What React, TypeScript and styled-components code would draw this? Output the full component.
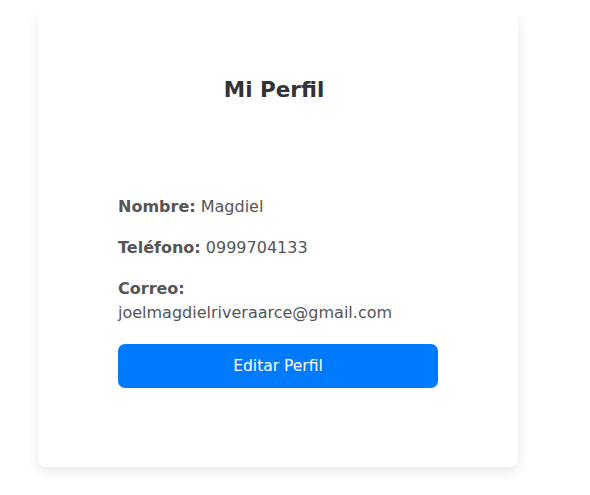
import React from "react";
import styled, { createGlobalStyle } from "styled-components";

const Global = createGlobalStyle`
  html, body { margin: 0; padding: 0; background: #ffffff; }
  body { font-family: "DejaVu Sans", "Noto Sans", sans-serif; }
`;

const Page = styled.div`
  padding: 14px 0 0 38px;
  width: 590px;
  height: 495px;
  box-sizing: border-box;
  overflow: hidden;
`;

const Card = styled.section`
  width: 480px;
  height: 453px;
  box-sizing: border-box;
  background: #ffffff;
  border-radius: 0 0 8px 8px;
  box-shadow: 0 4px 12px rgba(0, 0, 0, 0.1);
  clip-path: inset(0 -30px -30px -30px);
  padding: 58px 80px 0;
  display: flex;
  flex-direction: column;
  align-items: center;
`;

const Title = styled.h2`
  margin: 0;
  font-size: 21.5px;
  line-height: 36px;
  font-weight: 700;
  color: #333333;
  transform: translateX(-4px);
`;

const Details = styled.div`
  margin-top: 87px;
  width: 320px;
  display: flex;
  flex-direction: column;
  gap: 17px;
`;

const Row = styled.p`
  margin: 0;
  font-size: 16px;
  line-height: 24px;
  color: #555555;
`;

const Label = styled.strong`
  font-weight: 700;
  color: #555555;
`;

const Button = styled.button`
  margin-top: 2px;
  width: 320px;
  height: 44px;
  border: none;
  border-radius: 7px;
  background: #007bff;
  color: #ffffff;
  font-family: inherit;
  font-size: 15.5px;
  cursor: pointer;
`;

export default function App() {
  return (
    <>
      <Global />
      <Page>
        <Card>
          <Title>Mi Perfil</Title>
          <Details>
            <Row>
              <Label>Nombre:</Label> Magdiel
            </Row>
            <Row>
              <Label>Teléfono:</Label> 0999704133
            </Row>
            <Row>
              <Label>Correo:</Label> joelmagdielriveraarce@gmail.com
            </Row>
            <Button>Editar Perfil</Button>
          </Details>
        </Card>
      </Page>
    </>
  );
}
